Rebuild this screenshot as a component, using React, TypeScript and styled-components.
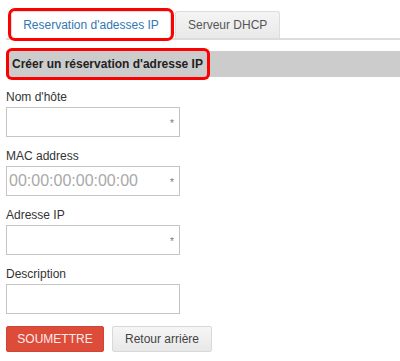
import React from "react";
import styled, { createGlobalStyle } from "styled-components";

type TabPropsType = {
  active?: boolean;
};

type ButtonPropsType = {
  primary?: boolean;
};

const GlobalStyle = createGlobalStyle`
  body {
    margin: 0;
    background: #fff;
    font-family: "Liberation Sans", Arial, sans-serif;
    color: #333;
  }
`;

const Page = styled.div`
  padding: 11px 0 0 6px;
`;

const TabBar = styled.div`
  display: flex;
  gap: 4px;
  padding-left: 5px;
  border-bottom: 2px solid #dcdcdc;
`;

const Tab = styled.div<TabPropsType>`
  display: flex;
  align-items: center;
  justify-content: center;
  box-sizing: border-box;
  height: 27px;
  padding: ${({ active }) => (active ? "0" : "0 12px")};
  white-space: nowrap;
  font-size: 12px;
  border: 1px solid #ddd;
  border-bottom: none;
  border-radius: ${({ active }) => (active ? "4px" : "3px 3px 0 0")};
  background: ${({ active }) =>
    active ? "#fff" : "linear-gradient(#f4f4f4, #e9e9e9)"};
  color: ${({ active }) => (active ? "#2f78b4" : "#555")};
  box-shadow: ${({ active }) => (active ? "0 0 0 3px #f00" : "none")};
  width: ${({ active }) => (active ? "160px" : "auto")};
  position: relative;
  z-index: 1;
`;

const SectionBar = styled.div`
  margin-top: 11px;
  height: 26px;
  background: #cccccc;
  display: flex;
  align-items: center;
`;

const SectionTitle = styled.span`
  display: flex;
  align-items: center;
  height: 26px;
  margin-left: 3px;
  padding: 0 4px 0 3px;
  font-size: 12px;
  font-weight: bold;
  color: #222;
  border-radius: 3px;
  box-shadow: 0 0 0 3px #f00;
`;

const Form = styled.form`
  display: flex;
  flex-direction: column;
  gap: 11px;
  padding-top: 12px;
`;

const Field = styled.div`
  display: flex;
  flex-direction: column;
`;

const Label = styled.label`
  font-size: 12px;
  line-height: 16px;
  color: #333;
  margin-bottom: 2px;
`;

const InputWrap = styled.div`
  position: relative;
  width: 174px;
`;

const Input = styled.input`
  box-sizing: border-box;
  width: 174px;
  height: 30px;
  border: 1px solid #c4c4c4;
  padding: 0 2px;
  font-family: "Liberation Sans", Arial, sans-serif;
  font-size: 16px;
  color: #333;
  outline: none;
  &::placeholder {
    color: #a9a9a9;
  }
`;

const Required = styled.span`
  position: absolute;
  right: 6px;
  top: 12px;
  font-size: 10px;
  line-height: 10px;
  color: #777;
  pointer-events: none;
`;

const Actions = styled.div`
  display: flex;
  gap: 8px;
  margin-top: 1px;
`;

const Button = styled.button<ButtonPropsType>`
  box-sizing: border-box;
  height: 26px;
  padding: 0;
  width: ${({ primary }) => (primary ? "98px" : "100px")};
  font-family: "Liberation Sans", Arial, sans-serif;
  font-size: 12px;
  border-radius: 2px;
  border: 1px solid ${({ primary }) => (primary ? "#d04436" : "#d8d8d8")};
  background: ${({ primary }) =>
    primary ? "#dd4b39" : "linear-gradient(#f6f6f6, #e8e8e8)"};
  color: ${({ primary }) => (primary ? "#fdecea" : "#444")};
  cursor: pointer;
`;

const FIELDS = [
  { label: "Nom d'hôte", placeholder: "", required: true },
  { label: "MAC address", placeholder: "00:00:00:00:00:00", required: true },
  { label: "Adresse IP", placeholder: "", required: true },
  { label: "Description", placeholder: "", required: false },
];

const App = () => {
  return (
    <Page>
      <GlobalStyle />
      <TabBar>
        <Tab active>Reservation d'adesses IP</Tab>
        <Tab>Serveur DHCP</Tab>
      </TabBar>
      <SectionBar>
        <SectionTitle>Créer un réservation d'adresse IP</SectionTitle>
      </SectionBar>
      <Form onSubmit={(e) => e.preventDefault()}>
        {FIELDS.map((item) => (
          <Field key={`field-${item.label}`}>
            <Label>{item.label}</Label>
            <InputWrap>
              <Input placeholder={item.placeholder} />
              {item.required && <Required>*</Required>}
            </InputWrap>
          </Field>
        ))}
        <Actions>
          <Button primary type="submit">
            SOUMETTRE
          </Button>
          <Button type="button">Retour arrière</Button>
        </Actions>
      </Form>
    </Page>
  );
};

export default App;
